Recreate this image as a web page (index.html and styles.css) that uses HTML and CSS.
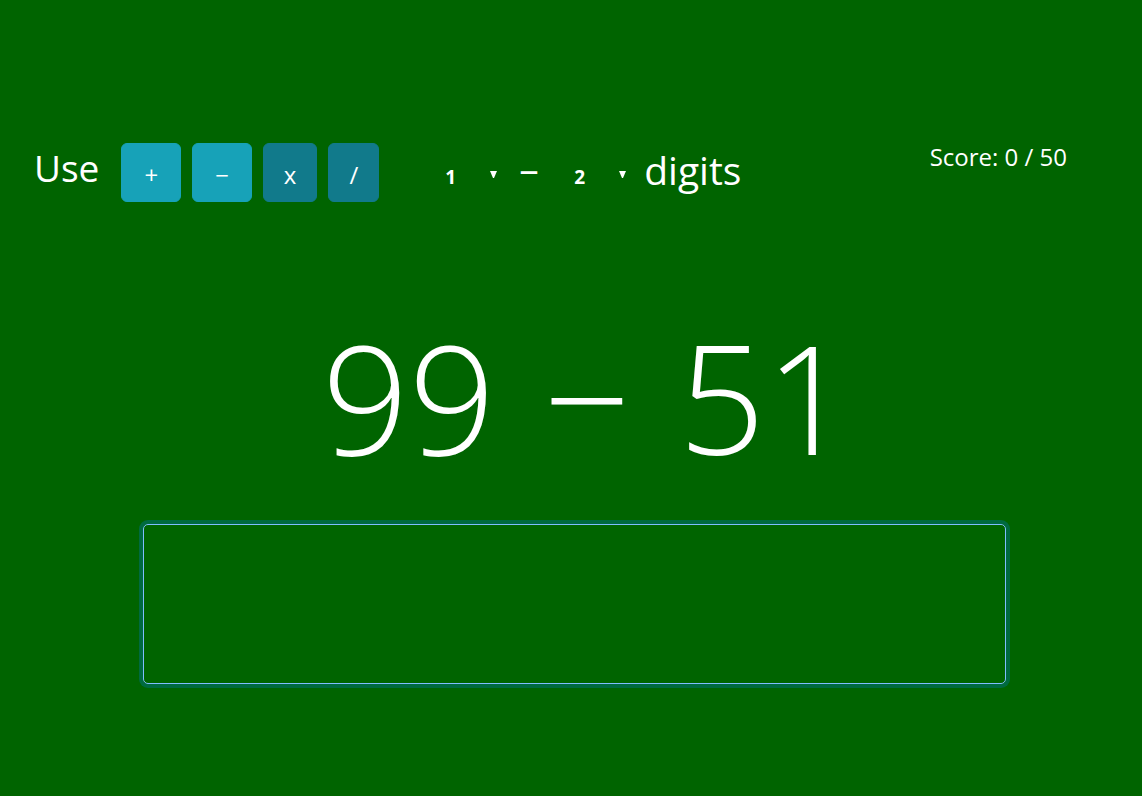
FILE: index.html
```html
<!DOCTYPE html>
<html lang="en">
<head>
<meta charset="utf-8">
<meta name="viewport" content="width=device-width, initial-scale=1">
<title>Arithmetic practice</title>
<link rel="stylesheet" href="styles.css">
</head>
<body>
<main class="page">
  <header class="toolbar">
    <div class="operators">
      <span class="label">Use</span>
      <div class="buttons">
        <button class="op op-on" type="button" aria-pressed="true">+</button>
        <button class="op op-on" type="button" aria-pressed="true">−</button>
        <button class="op" type="button" aria-pressed="false">x</button>
        <button class="op" type="button" aria-pressed="false">/</button>
      </div>
    </div>
    <div class="digits">
      <div class="picker">
        <select class="select" aria-label="Minimum digits"><option>1</option><option>2</option><option>3</option></select>
        <svg class="arrow" viewBox="0 0 7 7" aria-hidden="true"><path d="M0 0H7L4 7H3Z"/></svg>
      </div>
      <span class="dash">–</span>
      <div class="picker">
        <select class="select" aria-label="Maximum digits"><option>2</option><option>1</option><option>3</option></select>
        <svg class="arrow" viewBox="0 0 7 7" aria-hidden="true"><path d="M0 0H7L4 7H3Z"/></svg>
      </div>
      <span class="digits-label">digits</span>
    </div>
    <div class="score">Score: 0 / 50</div>
  </header>
  <section class="question">
    <span>99</span><span>−</span><span>51</span>
  </section>
  <input class="answer" type="text" aria-label="Answer" autocomplete="off">
</main>
</body>
</html>
```
FILE: styles.css
```css
* { box-sizing: border-box; }

body {
  margin: 0;
  background: #006400;
  color: #fff;
  font-family: "Open Sans", "Noto Sans", sans-serif;
}

.page { padding: 143px 0 112px; }

.toolbar {
  display: flex;
  align-items: flex-start;
  padding: 0 75px 0 34px;
}

.operators { display: flex; gap: 22px; }

.label {
  font-size: 37px;
  line-height: 50px;
}

.buttons { display: flex; gap: 11px; }

.op {
  height: 59px;
  padding: 5px 20px 0;
  border: 1px solid #117a8b;
  border-radius: 6px;
  background: #117a8b;
  color: #fff;
  font: 24px/36px "Open Sans", "Noto Sans", sans-serif;
}

.op-on {
  padding: 5px 22px 0;
  border-color: #17a2b8;
  background: #17a2b8;
}

.digits {
  display: flex;
  align-items: flex-start;
  margin-left: 62px;
}

.picker { display: grid; align-items: center; margin-top: 17px; }

.select {
  grid-area: 1 / 1;
  width: 62px;
  height: 34px;
  padding: 0 4px;
  border: 0;
  appearance: none;
  background: transparent;
  color: #fff;
  font: 700 19px/34px "Open Sans", "Noto Sans", sans-serif;
}

.arrow {
  grid-area: 1 / 1;
  justify-self: end;
  width: 7px;
  height: 7px;
  margin: 0 6px 6px 0;
  fill: #fff;
  pointer-events: none;
}

.dash {
  width: 67px;
  padding-left: 16px;
  font-size: 39px;
  line-height: 50px;
}

.digits-label {
  margin-left: 12px;
  font-size: 39px;
  line-height: 54px;
}

.score {
  margin-left: auto;
  font-size: 24px;
  line-height: 28px;
}

.question {
  display: flex;
  justify-content: center;
  gap: 48px;
  margin-top: 86px;
  padding-left: 32px;
  font-size: 152px;
  font-weight: 300;
  line-height: 218px;
}

.answer {
  display: block;
  width: calc(100% - 279px);
  height: 160px;
  margin: 18px auto 0 143px;
  padding: 6px 24px;
  border: 1px solid #80bdff;
  border-radius: 5px;
  outline: 0;
  background: transparent;
  box-shadow: 0 0 0 4px rgba(0, 123, 255, .25);
  color: #fff;
  font: 300 96px/144px "Open Sans", "Noto Sans", sans-serif;
  text-align: center;
}
```
